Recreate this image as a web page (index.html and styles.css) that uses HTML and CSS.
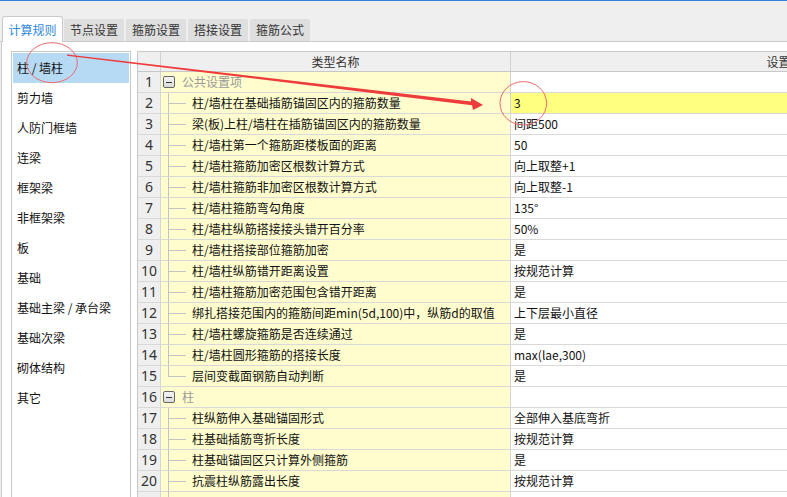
FILE: index.html
```html
<!DOCTYPE html>
<html lang="zh">
<head>
<meta charset="utf-8">
<link rel="stylesheet" href="styles.css">
</head>
<body>
<div class="app">
  <div class="tabbar">
    <div class="tab active">计算规则</div>
    <div class="tab">节点设置</div>
    <div class="tab">箍筋设置</div>
    <div class="tab">搭接设置</div>
    <div class="tab">箍筋公式</div>
  </div>
  <div class="panel">
    <aside class="side">
      <div class="item on">柱 / 墙柱</div>
      <div class="item">剪力墙</div>
      <div class="item">人防门框墙</div>
      <div class="item">连梁</div>
      <div class="item">框架梁</div>
      <div class="item">非框架梁</div>
      <div class="item">板</div>
      <div class="item">基础</div>
      <div class="item">基础主梁 / 承台梁</div>
      <div class="item">基础次梁</div>
      <div class="item">砌体结构</div>
      <div class="item">其它</div>
    </aside>
    <div class="grid">
      <div class="head"><div class="hc"></div><div class="hc">类型名称</div><div class="hc">设置</div></div>
      <div class="row"><div class="num">1</div><div class="name group"><span class="box"></span>公共设置项</div><div class="val"></div></div>
      <div class="row"><div class="num">2</div><div class="name child">柱/墙柱在基础插筋锚固区内的箍筋数量</div><div class="val hl">3</div></div>
      <div class="row"><div class="num">3</div><div class="name child">梁(板)上柱/墙柱在插筋锚固区内的箍筋数量</div><div class="val">间距500</div></div>
      <div class="row"><div class="num">4</div><div class="name child">柱/墙柱第一个箍筋距楼板面的距离</div><div class="val">50</div></div>
      <div class="row"><div class="num">5</div><div class="name child">柱/墙柱箍筋加密区根数计算方式</div><div class="val">向上取整+1</div></div>
      <div class="row"><div class="num">6</div><div class="name child">柱/墙柱箍筋非加密区根数计算方式</div><div class="val">向上取整-1</div></div>
      <div class="row"><div class="num">7</div><div class="name child">柱/墙柱箍筋弯勾角度</div><div class="val">135°</div></div>
      <div class="row"><div class="num">8</div><div class="name child">柱/墙柱纵筋搭接接头错开百分率</div><div class="val">50%</div></div>
      <div class="row"><div class="num">9</div><div class="name child">柱/墙柱搭接部位箍筋加密</div><div class="val">是</div></div>
      <div class="row"><div class="num">10</div><div class="name child">柱/墙柱纵筋错开距离设置</div><div class="val">按规范计算</div></div>
      <div class="row"><div class="num">11</div><div class="name child">柱/墙柱箍筋加密范围包含错开距离</div><div class="val">是</div></div>
      <div class="row"><div class="num">12</div><div class="name child">绑扎搭接范围内的箍筋间距min(5d,100)中，纵筋d的取值</div><div class="val">上下层最小直径</div></div>
      <div class="row"><div class="num">13</div><div class="name child">柱/墙柱螺旋箍筋是否连续通过</div><div class="val">是</div></div>
      <div class="row"><div class="num">14</div><div class="name child">柱/墙柱圆形箍筋的搭接长度</div><div class="val">max(lae,300)</div></div>
      <div class="row"><div class="num">15</div><div class="name child last">层间变截面钢筋自动判断</div><div class="val">是</div></div>
      <div class="row"><div class="num">16</div><div class="name group"><span class="box"></span>柱</div><div class="val"></div></div>
      <div class="row"><div class="num">17</div><div class="name child">柱纵筋伸入基础锚固形式</div><div class="val">全部伸入基底弯折</div></div>
      <div class="row"><div class="num">18</div><div class="name child">柱基础插筋弯折长度</div><div class="val">按规范计算</div></div>
      <div class="row"><div class="num">19</div><div class="name child">柱基础锚固区只计算外侧箍筋</div><div class="val">是</div></div>
      <div class="row"><div class="num">20</div><div class="name child">抗震柱纵筋露出长度</div><div class="val">按规范计算</div></div>
      <div class="row"><div class="num"></div><div class="name child"></div><div class="val"></div></div>
    </div>
  </div>
  <svg class="marks" width="787" height="497" viewBox="0 0 787 497">
    <ellipse cx="52" cy="62.7" rx="25.3" ry="20" fill="none" stroke="#ee6b6b" stroke-width="1"/>
    <ellipse cx="523.3" cy="103.3" rx="23.3" ry="21.7" fill="none" stroke="#ee6b6b" stroke-width="1"/>
    <polygon points="67,54.6 471,101.6 471,98 483,105 473,110 472,105.2 67,55.8" fill="#ee3b3b"/>
  </svg>
</div>
</body>
</html>
```
FILE: styles.css
```css
html, body {
  margin: 0;
  padding: 0;
}
body {
  width: 787px;
  height: 497px;
  overflow: hidden;
  background: #efefef;
  font-family: "Noto Sans CJK SC", "Microsoft YaHei", sans-serif;
  font-size: 12px;
  color: #111;
}
.app {
  position: relative;
  box-sizing: border-box;
  height: 497px;
  border-top: 1px solid #2f82d8;
  display: flex;
  flex-direction: column;
}
.tabbar {
  box-sizing: border-box;
  height: 41px;
  flex: none;
  border-bottom: 1px solid #c9c9c9;
  display: flex;
  align-items: flex-end;
  padding-left: 2px;
  gap: 2px;
}
.tab {
  box-sizing: border-box;
  width: 60px;
  height: 22px;
  line-height: 22px;
  text-align: center;
  background: #dfdfdf;
  color: #333;
  border-radius: 2px 2px 0 0;
}
.tab.active {
  width: 61px;
  height: 26px;
  line-height: 25px;
  margin-bottom: -1px;
  margin-right: -1px;
  background: #fff;
  color: #2f87d9;
  border: 1px solid #c9c9c9;
  border-bottom: none;
  border-radius: 3px 3px 0 0;
}
.panel {
  flex: 1;
  min-height: 0;
  display: flex;
  align-items: stretch;
  background: #fff;
  margin-left: 1px;
  border-left: 1px solid #c9c9c9;
  padding: 9px 0 0 9px;
  overflow: hidden;
}
.side {
  box-sizing: border-box;
  width: 120px;
  flex: none;
  border: 1px solid #c8c8c8;
  border-bottom: none;
  padding: 1px;
}
.item {
  height: 30px;
  line-height: 30px;
  padding-left: 4px;
  white-space: nowrap;
}
.item.on {
  background: #b6d9f4;
}
.grid {
  box-sizing: border-box;
  width: 910px;
  flex: none;
  margin-left: 6px;
  border-top: 1px solid #c8c8c8;
  border-left: 1px solid #c8c8c8;
}
.head {
  box-sizing: border-box;
  display: grid;
  grid-template-columns: 23px 350px 1fr;
  height: 20px;
  border-bottom: 1px solid #c8c8c8;
  background: #efefef;
}
.hc {
  border-right: 1px solid #d2d2d2;
  text-align: center;
  line-height: 19px;
  color: #333;
}
.row {
  box-sizing: border-box;
  display: grid;
  grid-template-columns: 23px 350px 1fr;
  height: 21px;
  border-bottom: 1px solid #d9d9d9;
}
.num {
  background: #efefef;
  border-right: 1px solid #d4d4d4;
  text-align: center;
  font-family: "Noto Sans", "Open Sans", sans-serif;
  font-size: 14px;
  line-height: 20px;
  color: #333;
}
.name {
  background-color: #fffdcd;
  border-right: 1px solid #d4d4d4;
  line-height: 20px;
  white-space: nowrap;
  overflow: hidden;
}
.name.child {
  padding-left: 31px;
  background-image: linear-gradient(#c4c4c4, #c4c4c4), linear-gradient(#c4c4c4, #c4c4c4);
  background-repeat: no-repeat;
  background-position: 7px 0, 8px 10px;
  background-size: 1px 100%, 17px 1px;
}
.name.child.last {
  background-size: 1px 11px, 17px 1px;
}
.name.group {
  display: flex;
  align-items: center;
  gap: 7px;
  padding-left: 2px;
  color: #9a9a9a;
}
.box {
  box-sizing: border-box;
  width: 12px;
  height: 12px;
  border: 1px solid #666;
  border-radius: 2px;
  background: linear-gradient(#f4f4f4, #dcdcdc);
  display: flex;
  align-items: center;
  justify-content: center;
}
.box::after {
  content: "";
  width: 6px;
  height: 1px;
  background: #333;
}
.val {
  background: #fff;
  padding-left: 3px;
  line-height: 20px;
  white-space: nowrap;
}
.val.hl {
  background: #ffff80;
}
.marks {
  position: absolute;
  left: 0;
  top: -1px;
  pointer-events: none;
}
```
